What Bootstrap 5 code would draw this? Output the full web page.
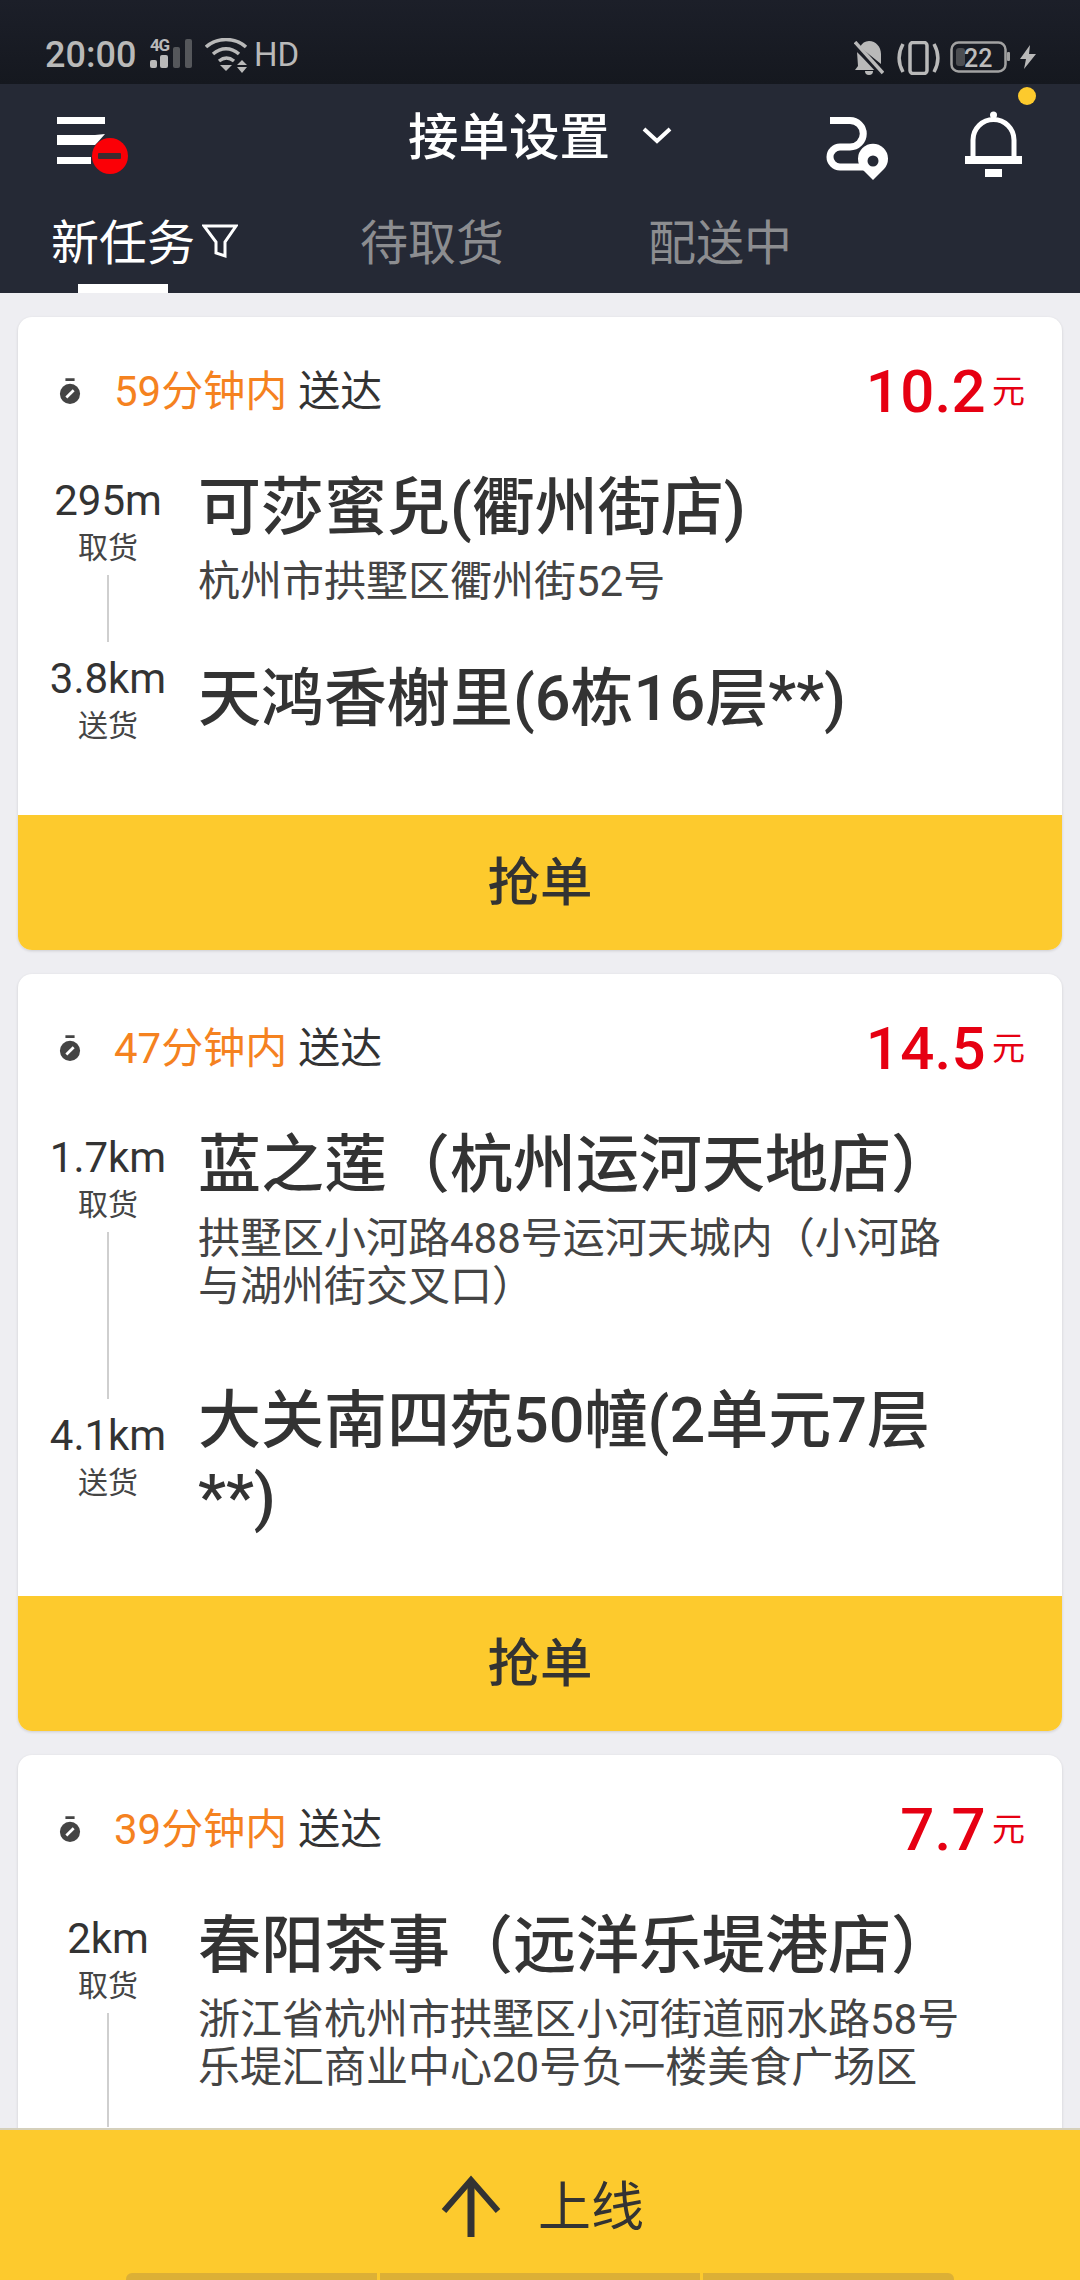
<!DOCTYPE html>
<html lang="zh"><head><meta charset="utf-8">
<link href="https://cdn.jsdelivr.net/npm/bootstrap@5.3.0/dist/css/bootstrap.min.css" rel="stylesheet">
<style>
html,body{height:2280px;overflow:hidden}
body{font-family:Roboto,"Noto Sans CJK SC",sans-serif;background:#eeeef2;color:#333;width:1080px;position:relative}
.sbar{height:84px;background:linear-gradient(#1c1f29,#15181f);color:#b9b9b9;padding:30px 44px 0 45px}
.sbar .tm{font-size:36px;line-height:50px;white-space:nowrap;font-weight:500;width:89px}
.sbar .hd{font-size:33px;line-height:50px;margin-left:5px;white-space:nowrap}
.ic4g{margin:9px 0 0 16px}
.icwifi{margin:8px 0 0 11px}
.sright{padding-top:7px}
.icvib{margin-left:13px}
.icbat{margin-left:10px}
.icbolt{margin-left:10px}
.hdr{height:209px;background:#252935;color:#fff;position:relative}
.toprow{height:108px;padding-left:56px}
.icmenu{width:72px;height:58px;margin-top:33px;flex:none}
.ttl{font-size:50.500px;font-weight:500;line-height:60px;margin:24px 0 0 280px;white-space:nowrap}
.icchev{margin:42px 0 0 32px;flex:none}
.icroute{margin:33px 0 0 154px;flex:none}
.icbell{margin:27px 0 0 77px;flex:none}
.tabsrow{height:101px;padding:22px 0 0 51px;font-size:48px;line-height:60px;color:#8c8d90}
.tabon{color:#fff;position:relative;width:309px}
.tabon::after{content:"";position:absolute;left:27px;top:70px;width:90px;height:9px;background:#fff}
.tabmid{width:288px}
.icfunnel{margin-left:7px;margin-top:9px}
.dot{position:absolute;left:1018px;top:3px;width:18px;height:18px;border-radius:50%;background:#fdca2d}
.list{padding:24px 18px 0;gap:24px}
.ocard{background:#fff;border:0;border-radius:14px;box-shadow:0 1px 3px rgba(0,0,0,.14);overflow:hidden;flex:none}
.h1card{height:633px}.h2card{height:757px}.h3card{height:525px;border-radius:14px 14px 0 0}
.ohead{padding:52px 37px 0 41px;height:152px}
.timeline{font-size:42px;line-height:46px;height:46px}
.icwatch{margin-right:33px;flex:none}
.orange{color:#f5821f}
.deliver{margin-left:11px}
.pricebox{height:46px}
.price{font-size:60px;font-weight:500;color:#e60012;line-height:46px;letter-spacing:.3px}
.unit{font-size:33px;color:#e60012;margin-left:6px;line-height:46px}
.leg{padding:0 38px 0 20px}
.distc{width:140px;flex:none;text-align:center;margin-right:20px}
.firstdist{margin-top:8px}
.dist{font-size:42px;line-height:48px;white-space:nowrap;color:#333}
.act{font-size:30px;line-height:46px;color:#444}
.vline{width:2px;background:#cfcfcf;margin:4px auto 0}
.v1{height:67px}.v2{height:167px}.v3{height:114px}
.leg2a{margin-top:13px}.leg2b{margin-top:-17px}
.name{font-size:63px;font-weight:500;line-height:77px;color:#333;white-space:nowrap}
.nameup{margin-top:-8px}
.addr{font-size:42px;line-height:48px;color:#444;margin-top:12px;white-space:nowrap}
.grab{height:135px;background:#fdca2d;font-size:52.500px;font-weight:500;color:#333;border:0;border-radius:0;width:100%;display:flex;align-items:center;justify-content:center;margin-top:auto;padding-top:8px}
.grab:hover{background:#fdca2d;color:#333}
.golive{position:absolute;left:0;right:0;top:2128px;height:152px;background:#fdca2d;border-top:2px solid #d5d0bb;font-size:53px;color:#333;line-height:60px}
.icup{margin-left:441px;flex:none;margin-top:45px}
.uptxt{margin:48px 0 0 37px}
.segs{position:absolute;left:126px;top:143px;display:flex;gap:3px}
.segs span{background:#dcb036;height:7px;display:block}
.s1{width:251px;border-radius:6px 0 0 0}.s2{width:320px}.s3{width:251px;border-radius:0 6px 0 0}
</style></head>
<body>
<div class="sbar d-flex justify-content-between">
  <div class="d-flex align-items-start">
    <span class="tm">20:00</span>
    <svg class="ic4g" width="44" height="30" viewBox="0 0 44 30" fill="#b9b9b9"><text x="0" y="12" font-family="Roboto" font-weight="700" font-size="17" textLength="20">4G</text><rect x="0" y="21" width="7" height="8" rx="2"/><rect x="10" y="16" width="8" height="13" rx="2"/><rect x="23" y="8" width="7" height="21" rx="2" fill="#55575b"/><rect x="35" y="0" width="7" height="29" rx="2" fill="#55575b"/></svg>
    <svg class="icwifi" width="44" height="36" viewBox="0 0 44 36" fill="none" stroke="#b9b9b9" stroke-width="3.500"><path d="M1 9C12-1 30-1 41 9M8 16c8-7 18-7 26 0M14 23c5-4 10-4 15 0"/><path d="M15 27h12l-6 6z" fill="#b9b9b9" stroke="none"/><path d="M37 22l5 5h-10zM37 35l5-6h-10z" fill="#b9b9b9" stroke="none"/></svg>
    <span class="hd">HD</span>
  </div>
  <div class="sright d-flex align-items-start">
    <svg width="30" height="36" viewBox="0 0 30 36" fill="#b9b9b9" class="mt-1"><path d="M15 0c7 0 12 6 12 13v10L6 6C8 2 11 0 15 0zM3 11l20 18H1l3-4z"/><path d="M11 30h8a4 4 0 0 1-8 0z"/><path d="M0 3l28 30" stroke="#1a1d25" stroke-width="6"/><path d="M1 1l28 31" stroke="#b9b9b9" stroke-width="3.500"/></svg>
    <svg class="icvib mt-1" width="43" height="34" viewBox="0 0 43 34" fill="none" stroke="#b9b9b9" stroke-width="3.500"><rect x="13" y="1.500" width="17" height="31" rx="3"/><path d="M6 3C1 12 1 22 6 31M37 3c5 9 5 19 0 28"/></svg>
    <svg class="icbat mt-1" width="60" height="32" viewBox="0 0 60 32" fill="none"><rect x="1.500" y="1.500" width="54" height="29" rx="7" stroke="#a2a2a2" stroke-width="2.500"/><rect x="6" y="7" width="9" height="18" rx="3" fill="#4c4e52"/><rect x="57" y="11" width="3" height="9" rx="1" fill="#a2a2a2"/><text x="14" y="26" font-family="Roboto" font-weight="500" font-size="25" fill="#bdbdbd">22</text></svg>
    <svg class="icbolt mt-2" width="16" height="24" viewBox="0 0 16 24" fill="#b9b9b9"><path d="M10 0L0 14h6L4 24l12-15H9z"/></svg>
  </div>
</div>
<div class="hdr">
  <span class="dot"></span>
  <div class="toprow d-flex align-items-start">
    <svg class="icmenu" viewBox="0 0 72 58"><path d="M1 0h48v7H1zM1 18h38l10-1-8 9-2 2H1zM1 40h34v7H1z" fill="#fff"/><circle cx="54" cy="39" r="18" fill="#fb0006"/><rect x="42" y="36" width="23" height="6" rx="1" fill="#3c2c30"/></svg>
    <span class="ttl">接单设置</span>
    <svg class="icchev" width="30" height="20" viewBox="0 0 30 20" fill="none" stroke="#fff" stroke-width="4"><path d="M2 3l13 12L28 3"/></svg>
    <svg class="icroute" width="62" height="64" viewBox="0 0 62 64" fill="none"><path d="M4 3.500H24a13 13 0 0 1 0 26.500H14a10 10 0 0 0 0 20H38" stroke="#fff" stroke-width="7"/><path d="M47 63L36 52a15 15 0 1 1 22 0z" fill="#fff"/><circle cx="47" cy="44" r="5.500" fill="#252935"/></svg>
    <svg class="icbell" width="58" height="67" viewBox="0 0 58 67" fill="none"><circle cx="28.500" cy="4" r="3.500" fill="#fff"/><path d="M8 47V29a20.500 20.500 0 0 1 41 0v18" stroke="#fff" stroke-width="5"/><rect x="0" y="45" width="57" height="8" fill="#fff"/><rect x="20" y="58" width="17" height="8" fill="#fff"/></svg>
  </div>
  <div class="tabsrow d-flex">
    <div class="tabon d-flex align-items-start">新任务<svg class="icfunnel" width="36" height="36" viewBox="0 0 36 36" fill="none" stroke="#fff" stroke-width="3"><path d="M2 3h32L23 19v14l-9-3V19z"/></svg></div>
    <div class="tabmid">待取货</div>
    <div>配送中</div>
  </div>
</div>
<div class="list d-flex flex-column">
  <div class="ocard card h1card">
    <div class="ohead d-flex justify-content-between">
      <div class="timeline d-flex align-items-center">
        <svg class="icwatch" width="22" height="28" viewBox="0 0 24 30"><rect x="7" y="0" width="10" height="3" fill="#444"/><circle cx="12" cy="17" r="11" fill="#444"/><path d="M8 21l8-8" stroke="#fff" stroke-width="3"/></svg>
        <span class="orange">59分钟内</span><span class="deliver">送达</span>
      </div>
      <div class="pricebox d-flex align-items-center"><span class="price">10.2</span><span class="unit">元</span></div>
    </div>
    <div class="leg d-flex">
      <div class="distc firstdist"><div class="dist">295m</div><div class="act">取货</div><div class="vline v1"></div></div>
      <div><div class="name">可莎蜜兒(衢州街店)</div><div class="addr">杭州市拱墅区衢州街52号</div></div>
    </div>
    <div class="leg leg2a d-flex align-items-center">
      <div class="distc"><div class="dist">3.8km</div><div class="act">送货</div></div>
      <div class="name nameup">天鸿香榭里(6栋16层**)</div>
    </div>
    <button class="grab btn">抢单</button>
  </div>
  <div class="ocard card h2card">
    <div class="ohead d-flex justify-content-between">
      <div class="timeline d-flex align-items-center">
        <svg class="icwatch" width="22" height="28" viewBox="0 0 24 30"><rect x="7" y="0" width="10" height="3" fill="#444"/><circle cx="12" cy="17" r="11" fill="#444"/><path d="M8 21l8-8" stroke="#fff" stroke-width="3"/></svg>
        <span class="orange">47分钟内</span><span class="deliver">送达</span>
      </div>
      <div class="pricebox d-flex align-items-center"><span class="price">14.5</span><span class="unit">元</span></div>
    </div>
    <div class="leg d-flex">
      <div class="distc firstdist"><div class="dist">1.7km</div><div class="act">取货</div><div class="vline v2"></div></div>
      <div><div class="name">蓝之莲（杭州运河天地店）</div><div class="addr">拱墅区小河路488号运河天城内（小河路<br>与湖州街交叉口）</div></div>
    </div>
    <div class="leg leg2b d-flex align-items-center">
      <div class="distc"><div class="dist">4.1km</div><div class="act">送货</div></div>
      <div class="name">大关南四苑50幢(2单元7层<br>**)</div>
    </div>
    <button class="grab btn">抢单</button>
  </div>
  <div class="ocard card h3card">
    <div class="ohead d-flex justify-content-between">
      <div class="timeline d-flex align-items-center">
        <svg class="icwatch" width="22" height="28" viewBox="0 0 24 30"><rect x="7" y="0" width="10" height="3" fill="#444"/><circle cx="12" cy="17" r="11" fill="#444"/><path d="M8 21l8-8" stroke="#fff" stroke-width="3"/></svg>
        <span class="orange">39分钟内</span><span class="deliver">送达</span>
      </div>
      <div class="pricebox d-flex align-items-center"><span class="price">7.7</span><span class="unit">元</span></div>
    </div>
    <div class="leg d-flex">
      <div class="distc firstdist"><div class="dist">2km</div><div class="act">取货</div><div class="vline v3"></div></div>
      <div><div class="name">春阳茶事（远洋乐堤港店）</div><div class="addr">浙江省杭州市拱墅区小河街道丽水路58号<br>乐堤汇商业中心20号负一楼美食广场区</div></div>
    </div>
  </div>
</div>
<div class="golive d-flex align-items-start">
  <svg class="icup" width="60" height="62" viewBox="0 0 60 62" fill="none" stroke="#333"><path d="M30 62V6" stroke-width="7"/><path d="M3 36L30 5l27 31" stroke-width="6"/></svg>
  <span class="uptxt">上线</span>
  <div class="segs"><span class="s1"></span><span class="s2"></span><span class="s3"></span></div>
</div>
</body></html>
